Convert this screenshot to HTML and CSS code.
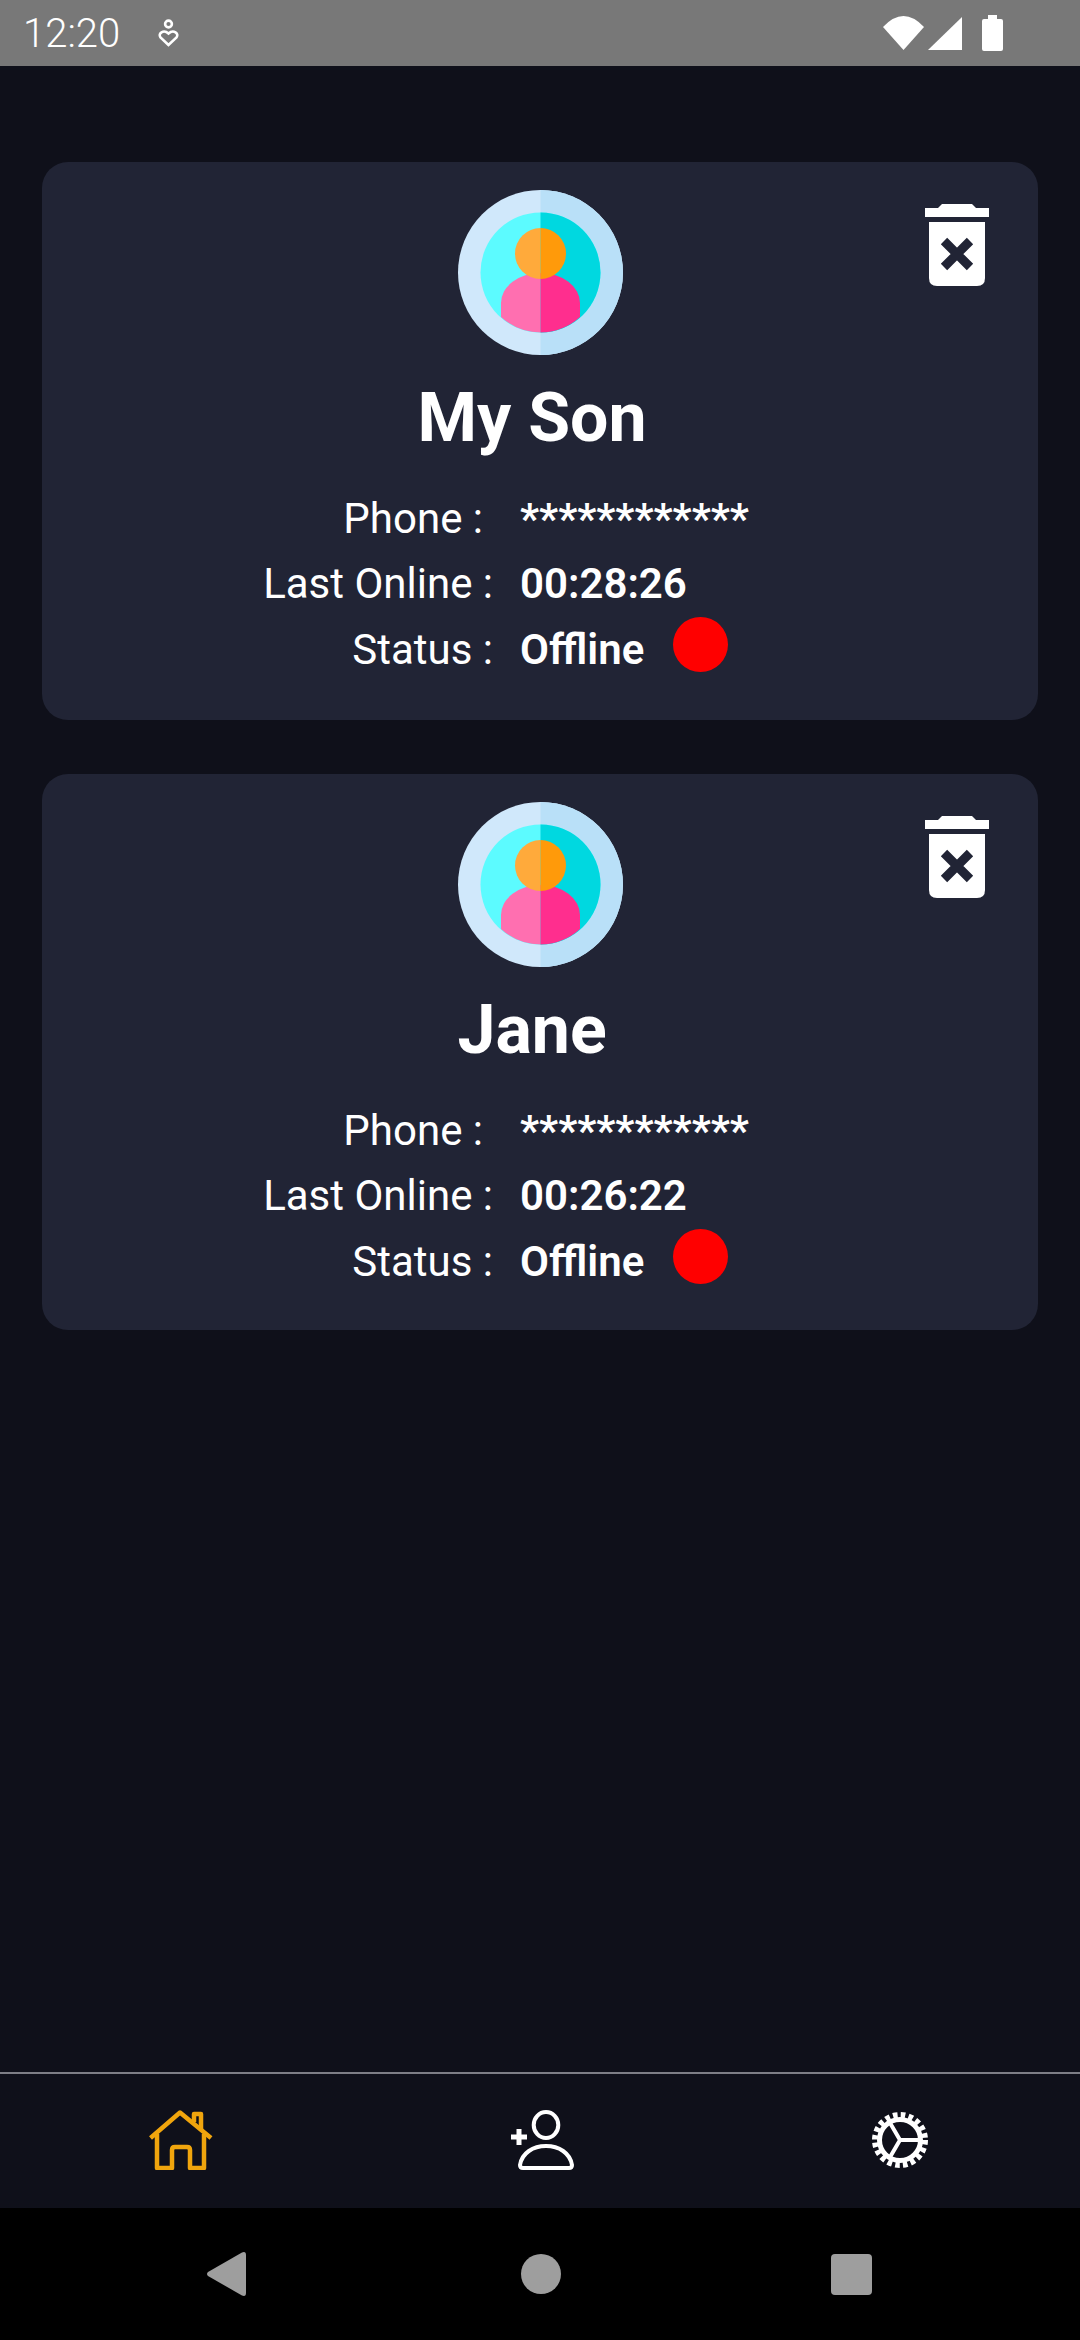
FILE: index.html
```html
<!DOCTYPE html>
<html lang="en">
<head>
    <meta charset="UTF-8">
    <meta name="viewport" content="width=device-width, initial-scale=1.0">
    <title>Devices</title>
    <link rel="stylesheet" href="styles.css">
</head>
<body>
    <div class="screen">
        <div class="status-bar">
            <span class="clock">12:20</span>
            <svg class="status-app" viewBox="0 0 21 28" fill="none" stroke="#fff" stroke-width="2.6">
                <circle cx="10.500" cy="5" r="3.400"/>
                <path d="M10.500 26 L2.500 18.500 C-0.500 14.500 5.500 10 10.500 14.500 C15.500 10 21.500 14.500 18.500 18.500 Z"/>
            </svg>
            <div class="status-icons">
                <svg class="wifi" viewBox="0 0 41 34" fill="#fff"><path d="M0 11 Q20.500 -11 41 11 L20.500 34 Z"/></svg>
                <svg class="signal" viewBox="0 0 34 33" fill="#fff"><path d="M34 0 V33 H0 Z"/></svg>
                <svg class="battery" viewBox="0 0 21 36" fill="#fff"><path d="M6 0 H15 V4 H19 Q21 4 21 6 V34 Q21 36 19 36 H2 Q0 36 0 34 V6 Q0 4 2 4 H6 Z"/></svg>
            </div>
        </div>

        <main class="content">
            <section class="card">
                <svg class="trash" viewBox="0 0 64 82">
                    <path fill="#fff" d="M17 0 H47 L51 4 H64 V13 H0 V4 H13 Z"/>
                    <path fill="#fff" d="M4 18 H60 V74 Q60 82 52 82 H12 Q4 82 4 74 Z"/>
                    <path fill="none" stroke="#212435" stroke-width="9" d="M19 37 L45 63 M45 37 L19 63"/>
                </svg>
                <svg class="avatar" viewBox="0 0 165 165">
                    <circle cx="82.5" cy="82.5" r="82.5" fill="#d0e8fb"/>
                    <path d="M82.5 0 A82.5 82.5 0 0 1 82.5 165 Z" fill="#b9e0f8"/>
                    <circle cx="82.5" cy="82.5" r="60" fill="#5cfbff"/>
                    <path d="M82.5 22.5 A60 60 0 0 1 82.5 142.5 Z" fill="#00d8e0"/>
                    <path d="M43 127 V113 A39.500 30 0 0 1 82.500 83 V142.500 A60 60 0 0 1 43 127 Z" fill="#ff6fb0"/>
                    <path d="M122 127 V113 A39.500 30 0 0 0 82.500 83 V142.500 A60 60 0 0 0 122 127 Z" fill="#ff2e8e"/>
                    <path d="M82.5 38 A25.500 25.500 0 0 0 82.500 89 Z" fill="#ffaa3b"/>
                    <path d="M82.5 38 A25.500 25.500 0 0 1 82.500 89 Z" fill="#ff9a0a"/>
                </svg>
                <h2 class="name">My Son</h2>
                <div class="info">
                    <div class="row"><span class="label label-phone">Phone :</span><span class="value value-masked">************</span></div>
                    <div class="row"><span class="label">Last Online :</span><span class="value">00:28:26</span></div>
                    <div class="row"><span class="label">Status :</span><span class="value">Offline</span><span class="dot"></span></div>
                </div>
            </section>

            <section class="card">
                <svg class="trash" viewBox="0 0 64 82">
                    <path fill="#fff" d="M17 0 H47 L51 4 H64 V13 H0 V4 H13 Z"/>
                    <path fill="#fff" d="M4 18 H60 V74 Q60 82 52 82 H12 Q4 82 4 74 Z"/>
                    <path fill="none" stroke="#212435" stroke-width="9" d="M19 37 L45 63 M45 37 L19 63"/>
                </svg>
                <svg class="avatar" viewBox="0 0 165 165">
                    <circle cx="82.5" cy="82.5" r="82.5" fill="#d0e8fb"/>
                    <path d="M82.5 0 A82.5 82.5 0 0 1 82.5 165 Z" fill="#b9e0f8"/>
                    <circle cx="82.5" cy="82.5" r="60" fill="#5cfbff"/>
                    <path d="M82.5 22.5 A60 60 0 0 1 82.5 142.5 Z" fill="#00d8e0"/>
                    <path d="M43 127 V113 A39.500 30 0 0 1 82.500 83 V142.500 A60 60 0 0 1 43 127 Z" fill="#ff6fb0"/>
                    <path d="M122 127 V113 A39.500 30 0 0 0 82.500 83 V142.500 A60 60 0 0 0 122 127 Z" fill="#ff2e8e"/>
                    <path d="M82.5 38 A25.500 25.500 0 0 0 82.500 89 Z" fill="#ffaa3b"/>
                    <path d="M82.5 38 A25.500 25.500 0 0 1 82.500 89 Z" fill="#ff9a0a"/>
                </svg>
                <h2 class="name">Jane</h2>
                <div class="info">
                    <div class="row"><span class="label label-phone">Phone :</span><span class="value value-masked">************</span></div>
                    <div class="row"><span class="label">Last Online :</span><span class="value">00:26:22</span></div>
                    <div class="row"><span class="label">Status :</span><span class="value">Offline</span><span class="dot"></span></div>
                </div>
            </section>
        </main>

        <nav class="tab-bar">
            <svg class="tab-icon" viewBox="0 0 64 60" fill="none" stroke="#f0a50d" stroke-width="4.500" stroke-linejoin="round">
                <path d="M1.500 28 L31 2.500 L62 28"/>
                <path d="M8 24 V58 H23 V40 Q23 37 26 37 H38 Q41 37 41 40 V58 H55 V24"/>
                <path d="M45 12 V4 H52 V20"/>
            </svg>
            <svg class="tab-icon" viewBox="0 0 64 60" fill="none" stroke="#fff" stroke-width="4">
                <ellipse cx="35" cy="15" rx="12.300" ry="13"/>
                <path d="M9 55 C11 43 22 36 35 36 C48 36 59 43 61 55 Q61 58 58 58 H12 Q9 58 9 55 Z"/>
                <path d="M0 27 H16 M8 19 V35" stroke-width="5"/>
            </svg>
            <svg class="tab-icon gear" viewBox="0 0 56 56" fill="none" stroke="#fff">
                <circle cx="28" cy="28" r="20.500" stroke-width="5"/>
                <circle cx="28" cy="28" r="25" stroke-width="6" stroke-dasharray="4.600 3.254"/>
                <path d="M28 28 H48 M28 28 L17.500 10 M28 28 L17.500 46" stroke-width="4"/>
            </svg>
        </nav>

        <div class="nav-bar">
            <svg class="nav-back" viewBox="0 0 39 44"><path fill="#9e9e9e" d="M1 20 L35 0.500 Q39 -1 39 3 V41 Q39 45 35 43.500 L1 24 Q-1 22 1 20 Z"/></svg>
            <span class="nav-home"></span>
            <span class="nav-recent"></span>
        </div>
    </div>
</body>
</html>
```

FILE: styles.css
```css
* {
    box-sizing: border-box;
}
body {
    margin: 0;
    background-color: #0f101a;
    font-family: Roboto, sans-serif;
    color: #fff;
}
.screen {
    display: flex;
    flex-direction: column;
    height: 2340px;
}
.status-bar {
    display: flex;
    align-items: center;
    height: 66px;
    padding: 0 77px 0 23px;
    background: #787878;
}
.clock {
    padding-top: 2px;
    font-size: 40px;
    font-weight: 300;
    line-height: 64px;
}
.status-app {
    width: 21px;
    height: 28px;
    margin-left: 38px;
}
.status-icons {
    display: flex;
    align-items: center;
    margin-left: auto;
}
.wifi {
    width: 41px;
    height: 34px;
}
.signal {
    width: 34px;
    height: 33px;
    margin-left: 4px;
}
.battery {
    width: 21px;
    height: 36px;
    margin-left: 20px;
}
.content {
    flex: 1;
    display: flex;
    flex-direction: column;
    gap: 54px;
    padding: 96px 42px 0;
}
.card {
    position: relative;
    height: 558px;
    padding-top: 28px;
    background: #212435;
    border-radius: 26px;
}
.card:last-child {
    height: 556px;
}
.trash {
    position: absolute;
    top: 42px;
    right: 49px;
    width: 64px;
    height: 82px;
}
.avatar {
    display: block;
    width: 165px;
    height: 165px;
    margin: 0 auto;
}
.name {
    margin: 24px 16px 0 0;
    font-size: 68px;
    font-weight: 700;
    line-height: 78px;
    text-align: center;
}
.info {
    display: flex;
    flex-direction: column;
    gap: 15.5px;
    margin-top: 36px;
}
.row {
    display: flex;
    align-items: center;
    height: 50px;
    font-size: 42px;
}
.label {
    width: 451px;
    text-align: right;
}
.label-phone {
    padding-right: 10px;
}
.value {
    margin-left: 27px;
    font-weight: 600;
}
.value-masked {
    font-weight: 700;
}
.dot {
    width: 55px;
    height: 55px;
    margin: -9px 0 0 29px;
    background: #ff0000;
    border-radius: 50%;
}
.tab-bar {
    display: flex;
    justify-content: space-between;
    align-items: center;
    height: 136px;
    padding: 0 152px 2px 149px;
    border-top: 2px solid #7d7e86;
}
.tab-icon {
    width: 64px;
    height: 60px;
}
.tab-icon.gear {
    width: 56px;
    height: 56px;
}
.nav-bar {
    display: flex;
    justify-content: space-between;
    align-items: center;
    height: 132px;
    padding: 0 208px 0 207px;
    background: #000;
}
.nav-back {
    width: 39px;
    height: 44px;
    margin-right: 4px;
}
.nav-home {
    width: 40px;
    height: 40px;
    background: #9e9e9e;
    border-radius: 50%;
}
.nav-recent {
    width: 41px;
    height: 41px;
    background: #9e9e9e;
    border-radius: 4px;
}
```
